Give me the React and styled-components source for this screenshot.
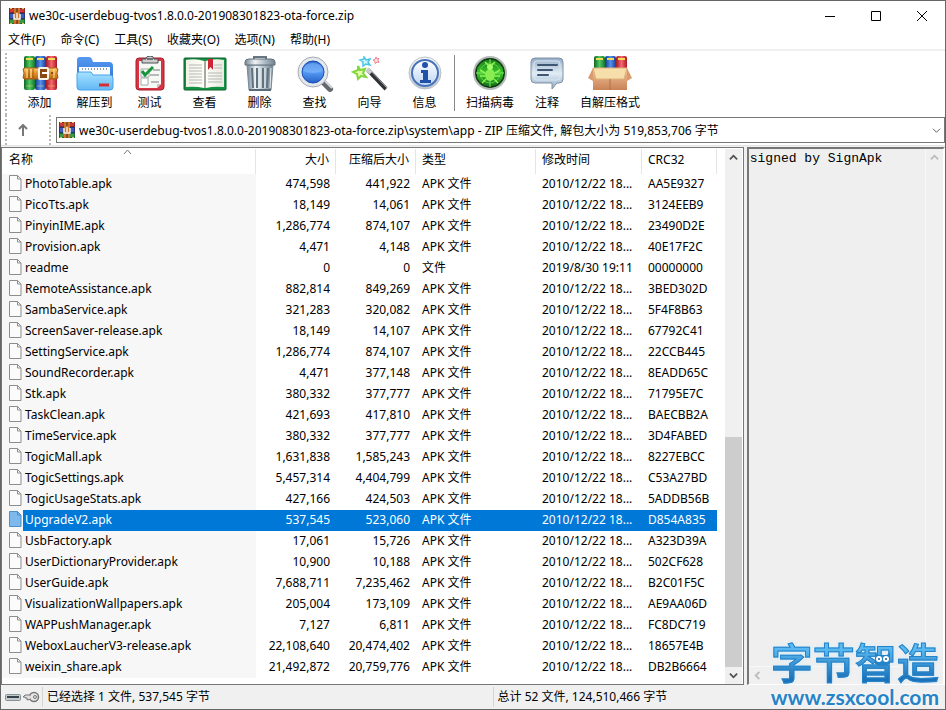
import React from "react";
import styled, { createGlobalStyle, css } from "styled-components";

const GlobalStyle = createGlobalStyle`
  *, *::before, *::after { box-sizing: border-box; }
  body { margin: 0; background: #fff; }
  body, button, select {
    font-family: "Noto Sans", "Noto Sans CJK SC", sans-serif;
    font-size: 12px;
    color: #000;
  }
  button { border: 0; padding: 0; background: none; }
`;

const Window = styled.div`
  display: flex;
  flex-direction: column;
  min-height: 100vh;
  background: #f0f0f0;
  border: 1px solid #666;
  position: relative;
`;

const GradientSheet = styled.svg`
  position: absolute;
`;

const TitleBar = styled.header`
  display: flex;
  align-items: center;
  gap: 4px;
  height: 30px;
  padding-left: 8px;
  background: #fff;
`;
const Title = styled.h1`
  flex: 1;
  margin: 0;
  font-size: 12px;
  line-height: 18px;
  font-weight: 400;
`;
const WindowButtons = styled.div`
  display: flex;
`;
const WindowButton = styled.button`
  width: 46px;
  height: 30px;
  display: grid;
  place-items: center;
`;

const MenuBar = styled.nav`
  display: flex;
  gap: 1px;
  height: 20px;
  background: #fff;
  border-bottom: 2px solid #f0f0f0;
`;
const MenuItem = styled.button`
  padding: 0 7px;
  line-height: 18px;
`;

const Grip = styled.span`
  width: 2px;
  align-self: stretch;
  background: repeating-linear-gradient(#b8b8b8 0 2px, #fff 2px 4px);
`;

const ToolBar = styled.div`
  display: flex;
  align-items: stretch;
  height: 64px;
  padding: 2px 0 0 4px;
  background: #fff;
`;
const ToolButton = styled.button`
  width: ${(p) => p.$width}px;
  display: flex;
  flex-direction: column;
  align-items: center;
  padding-top: 3px;
  line-height: 18px;
  white-space: nowrap;
`;
const ToolIcon = styled.span`
  height: 38px;
  display: flex;
  justify-content: center;
  align-items: flex-start;
`;
const ToolGroup = styled.div`
  display: flex;
  padding-left: 5px;
`;
const Separator = styled.span`
  width: 1px;
  margin: 2px 0 4px 2px;
  background: #888;
`;

const AddressBar = styled.div`
  display: flex;
  align-items: stretch;
  height: 30px;
  padding: 0 0 0 4px;
  background: #fff;
`;
const UpButton = styled.button`
  width: 42px;
  padding-right: 10px;
  display: grid;
  place-items: center;
`;
const AddressBox = styled.label`
  flex: 1;
  display: flex;
  align-items: center;
  gap: 4px;
  height: 26px;
  margin: 2px 0 0 5px;
  padding: 0 3px 0 2px;
  border: 1px solid #777;
  background: #fff;
`;
const AddressSelect = styled.select`
  flex: 1;
  min-width: 0;
  height: 22px;
  padding: 0;
  border: 0;
  background: transparent;
  appearance: none;
`;

const Content = styled.main`
  flex: 1;
  display: flex;
  gap: 3px;
  padding-top: 1px;
  border-top: 1px solid #e4e4e4;
`;
const Pane = styled.section`
  display: flex;
  border: 2px solid #777;
  border-color: #777 #fff #fff #777;
  border-bottom: 1px solid #777;
`;
const FilePane = styled(Pane)`
  flex: 1;
  min-width: 0;
  background: #fff;
  border-width: 1px;
  border-right-color: #777;
  padding: 1px 1px 0 0;
`;
const CommentPane = styled(Pane)`
  flex: 0 0 21%;
  background: #f0f0f0;
  border-bottom-color: #fff;
`;
const CommentColumn = styled.div`
  flex: 1;
  display: flex;
  flex-direction: column;
`;
const CommentText = styled.pre`
  flex: 1;
  margin: 0;
  padding: 1px 1px;
  font: 13px/18px "Liberation Mono", monospace;
  background: #efefef;
  border-right: 1px solid #f8f8f8;
  border-bottom: 1px solid #f8f8f8;
`;

const ListArea = styled.div`
  flex: 1;
  min-width: 0;
  overflow: hidden;
`;
const Table = styled.table`
  width: 715px;
  table-layout: fixed;
  border-collapse: separate;
  border-spacing: 0;
`;
const HeaderCell = styled.th`
  height: 25px;
  padding: 0 6px 3px;
  padding-left: ${(p) => (p.$sorted ? 7 : 6)}px;
  font-weight: 400;
  line-height: 18px;
  text-align: ${(p) => p.$align || "left"};
  border-right: 1px solid #e5e5e5;
  position: relative;
`;
const SortMark = styled.svg`
  position: absolute;
  top: 0;
  left: 48%;
`;
const Cell = styled.td`
  height: 21px;
  padding: 0 6px;
  line-height: 20px;
  vertical-align: top;
  white-space: nowrap;
  overflow: hidden;
  text-overflow: clip;
  text-align: ${(p) => p.$align || "left"};
`;
const NameCell = styled(Cell)`
  padding: 0;
  background: #f7f7f8;
`;
const NameLayout = styled.div`
  display: flex;
  height: 21px;
  padding-left: 7px;
  gap: 1px;
`;
const NameText = styled.span`
  flex: 1;
  padding-left: 2px;
`;
const Row = styled.tr`
  ${(p) =>
    p.$selected &&
    css`
      color: #fff;
      ${Cell} { background: #0078d7; }
      ${NameCell} { background: #f7f7f8; }
      ${NameText} { background: #0078d7; }
    `}
`;

const ScrollBar = styled.div`
  width: 17px;
  display: flex;
  flex-direction: column;
  background: #f0f0f0;
`;
const ScrollButton = styled.button`
  height: 17px;
  width: 17px;
  display: grid;
  place-items: center;
`;
const Track = styled.div`
  flex: 1;
  display: flex;
  flex-direction: column;
  justify-content: flex-end;
`;
const Thumb = styled.div`
  height: 46%;
  background: #cdcdcd;
`;

const StatusBar = styled.footer`
  display: flex;
  height: 24px;
  align-items: center;
  background: #f0f0f0;
`;
const StatusIcons = styled.span`
  display: flex;
  gap: 2px;
  width: 41px;
  padding-left: 4px;
`;
const StatusText = styled.span`
  flex: ${(p) => p.$grow};
  padding-left: 4px;
  line-height: 20px;
  border-left: 1px solid #d4d4d4;
`;

const Watermark = styled.a`
  position: absolute;
  right: 6px;
  bottom: 0;
  display: flex;
  flex-direction: column;
  align-items: center;
  text-decoration: none;
  color: #2583c8;
`;
const WatermarkName = styled.span`
  font: 500 42px/40px Lato, "Noto Sans CJK SC", sans-serif;
  padding-bottom: 2px;
  background: linear-gradient(#5ab9f0 15%, #1b72ba 85%);
  background-clip: text;
  color: transparent;
  -webkit-text-stroke: 1px #2583c8;
  filter: drop-shadow(0 0 2px #d5ecfa);
`;
const WatermarkSite = styled.span`
  font: 700 21px/24px Lato, sans-serif;
  text-shadow: 0 0 3px #fff;
`;
const WatermarkArt = styled.svg`
  position: absolute;
  left: 10px;
  top: 0;
`;

function Chevron({ dir = "down", color = "#505050", size = 9, weight = 2 }) {
  const turn = { down: 0, left: 90, up: 180, right: 270 }[dir];
  return (
    <svg width={size} height={size} viewBox="0 0 10 10">
      <path d="M1 3L5 7L9 3" fill="none" stroke={color} strokeWidth={weight} transform={`rotate(${turn} 5 5)`} />
    </svg>
  );
}

function ArchiveIcon() {
  return (
    <svg width="16" height="16" viewBox="0 0 16 16">
      <path fill="#8a2528" d="M0 0h16v5H0z" />
      <path fill="#26367f" d="M0 5h16v6H0z" />
      <path fill="#1d6a2c" d="M0 11h16v5H0z" />
      <path fill="#c8393c" d="M1 1h4v3H1zM11 1h4v3h-4z" />
      <path fill="#3d5cbb" d="M1 6h4v4H1zM11 6h4v4h-4z" />
      <path fill="#3d9a4b" d="M1 12h4v3H1zM11 12h4v3h-4z" />
      <path fill="#c9762c" d="M5 0h6v16H5z" />
      <path fill="#8d4a22" d="M7 0h2v4H7zM7 12h2v4H7z" />
      <path d="M5 6v5h6V6M8 5v5" fill="none" stroke="#f6f1ea" strokeWidth="1.500" />
      <path d="M1 .5h2M13 .5h2M1 15.500h2M13 15.500h2" stroke="#e0c764" />
    </svg>
  );
}

function FileIcon({ selected }) {
  const line = selected ? "#4f8fc6" : "#8d8d8d";
  return (
    <svg width="13" height="19" viewBox="0 0 13 19">
      <path d="M.5 1.500h8l3.500 3.500v11.500H.5z" fill={selected ? "#7db9ec" : "#fbfbfc"} stroke={line} />
      <path d="M8.500 1.500v3.500h3.500" fill="none" stroke={line} />
    </svg>
  );
}

function Books({ h = 34, w = 11, x = 1 }) {
  const fills = ["url(#bookGreen)", "url(#bookBlue)", "url(#bookRed)"];
  return fills.map((fill, i) => (
    <g key={fill}>
      <rect x={x + i * w} y="0" width={w} height={h} rx="2" fill={fill} />
      <path d={`M${x + i * w + 2} 3h${w - 4}`} stroke="#f6dc55" strokeWidth="2" />
    </g>
  ));
}

const AddIcon = () => (
  <svg width="38" height="36" viewBox="0 0 38 36">
    <Books x={3} />
    <path d="M5 30h7M16 30h7M27 30h7" stroke="#f6dc55" strokeOpacity=".5" />
    <path d="M2 13q2-2 5-1h25q3-1 5 1l-1 4 1 5q-3 2-5 1H7q-3 1-5-1l1-5z" fill="url(#leather)" stroke="#a65b12" />
    <path d="M6 13v9M10 13v9M33 13v9" stroke="#ffe69c" />
    <path d="M8 13v9M12 13v9" stroke="#9c5510" />
    <rect x="18" y="12" width="9" height="11" rx="1" fill="#8a4712" stroke="#f6f3e8" strokeWidth="2" />
    <path d="M21 17h7" stroke="#fff" strokeWidth="2" />
    <circle cx="31" cy="17" r="1" fill="#6b3508" />
  </svg>
);
const ExtractIcon = () => (
  <svg width="38" height="36" viewBox="0 0 38 36">
    <path d="M1 31V4q0-3 3-3h9q2 0 3 2l1 3h16q4 0 4 4v21z" fill="url(#folderBack)" />
    <path d="M3 11h31v12H3z" fill="#f7fafc" />
    <path d="M6 13h27" stroke="#909ba6" strokeWidth="2" strokeDasharray="1 2" />
    <path d="M1 18q0-2 2-2h12l2 3h17q3 0 3 3v9q0 3-3 3H4q-3 0-3-3z" fill="url(#folderFront)" stroke="#49a2e9" />
    <path d="M23 29h10" stroke="#d52e36" strokeWidth="3" />
  </svg>
);
const TestIcon = () => (
  <svg width="30" height="36" viewBox="0 0 30 36">
    <rect x="1" y="2" width="28" height="32" rx="3" fill="#d83443" stroke="#a71e2d" />
    <path d="M4 5h22v23l-4 4H4z" fill="#f7f7f4" />
    <path d="M22 32v-4h4z" fill="#c3c6c8" />
    <path d="M7 7V3h4q0-3 4-3t4 3h4v4z" fill="#ccc" stroke="#4c5154" />
    <path d="M12 3h6" stroke="#6e7376" strokeWidth="2" />
    <path d="M6 13h8v8H6zM6 22h7v7H6z" fill="#fff" stroke="#a0a8a6" />
    <path d="M7 15l3 4 8-8" fill="none" stroke="#16943b" strokeWidth="3" />
    <path d="M18 14h7M15 19h9M16 26h8" stroke="#a0a6a8" strokeWidth="1.500" />
  </svg>
);
const ViewIcon = () => (
  <svg width="44" height="36" viewBox="0 0 44 36">
    <rect x="1" y="2" width="42" height="32" rx="1" fill="#159143" stroke="#0b602b" />
    <path d="M3 4q10-2 18 1v27q-8-2-18-1zM41 4q-10-2-18 1v27q8-2 18-1z" fill="url(#paper)" />
    <path d="M21 5h2v27h-2z" fill="#a7a8a0" />
    <path d="M6 9h13M6 12h13M6 15h13M6 18h13M6 21h13M6 24h13M6 27h13M31 9h8M31 12h8M25 17h14M25 20h14M25 23h14M25 26h14" stroke="#b5b8b5" />
    <path d="M25 3h5v11l-2.500-3-2.500 3z" fill="#cf2434" />
  </svg>
);
const DeleteIcon = () => (
  <svg width="34" height="36" viewBox="0 0 34 36">
    <path d="M11 3V1h12v2" fill="none" stroke="#677580" strokeWidth="2" />
    <path d="M4 9h26l-2 25H6z" fill="url(#steel)" stroke="#788996" />
    <path d="M9 12l1 20M14 12v20M20 12v20M25 12l-1 20" stroke="#61727f" strokeWidth="2" />
    <path d="M12 12v20M17 12v20M22 12v20M28 12l-1 20" stroke="#e8f0f4" />
    <path d="M2 9V6q0-3 4-3h22q4 0 4 3v3z" fill="url(#steel)" stroke="#61717e" />
    <path d="M6 34h22" stroke="#596b78" strokeWidth="2" />
  </svg>
);
const FindIcon = () => (
  <svg width="40" height="38" viewBox="0 0 40 38">
    <path d="M27 25l8 8" stroke="#65696e" strokeWidth="6" strokeLinecap="round" />
    <path d="M29 24l8 8" stroke="#d5d8da" strokeWidth="2" />
    <circle cx="18" cy="16" r="13" fill="url(#lens)" stroke="#e4e8ec" strokeWidth="4" />
    <circle cx="18" cy="16" r="15" fill="none" stroke="#a4abb3" />
    <circle cx="18" cy="16" r="11" fill="none" stroke="#164eae" />
    <path d="M8 15q1-8 10-8t10 8q-10 4-20 0z" fill="#8bc4ff" opacity=".5" />
  </svg>
);
const WizardIcon = () => (
  <svg width="38" height="36" viewBox="0 0 38 36">
    <path d="M17 14L35 33" stroke="#303236" strokeWidth="4" />
    <path d="M18 13L36 32" stroke="#a2a5aa" />
    <path d="M16 13l4 4" stroke="#c8cccf" strokeWidth="4" />
    <path d="M7 10l2 4 5-1-2 4 3 4-5-1-3 3-1-5-4-2 5-2z" fill="#e4ffa8" stroke="#83d63f" strokeWidth="2" />
    <path d="M13 1l2 3 4-1-2 3 2 3-4-1-3 2v-4l-3-2 4-1z" fill="#ccf6ff" stroke="#4bc5e7" strokeWidth="1.500" />
    <path d="M25 1l1 2 2-.5-1 2 1 2-2-.5-2 1.500v-2l-2-1.500 2-.5z" fill="#ffe1e6" stroke="#ee8291" />
  </svg>
);
const InfoIcon = () => (
  <svg width="36" height="36" viewBox="0 0 36 36">
    <circle cx="18" cy="17" r="16" fill="url(#steelLight)" stroke="#b9c0c8" />
    <circle cx="18" cy="17" r="13" fill="url(#infoBlue)" stroke="#4771b8" strokeWidth="2" />
    <circle cx="18" cy="9" r="3" fill="#2150aa" />
    <path d="M14 14h7v10h3v3H13v-3h3v-7h-2z" fill="#2150aa" />
  </svg>
);
const VirusIcon = () => (
  <svg width="36" height="36" viewBox="0 0 36 36">
    <circle cx="18" cy="17" r="16" fill="#104b14" stroke="#b4bab7" strokeWidth="2" />
    <circle cx="18" cy="17" r="14" fill="url(#radar)" stroke="#172b18" />
    <path d="M4 17h28M18 3v28" stroke="#82e65c" />
    <circle cx="18" cy="17" r="10" fill="none" stroke="#61c941" />
    <ellipse cx="18" cy="19" rx="5" ry="6" fill="#89ed51" />
    <circle cx="18" cy="11" r="3" fill="#a2ff6a" />
    <path d="M13 17l-5-3M23 17l5-3M13 20H8M23 20h5M14 23l-4 4M22 23l4 4M16 9l-3-3M20 9l3-3" stroke="#8cf454" strokeWidth="1.500" />
  </svg>
);
const CommentIcon = () => (
  <svg width="34" height="36" viewBox="0 0 34 36">
    <path d="M5 2h24q4 0 4 4v17q0 4-4 4h-2l-5 6v-6H5q-4 0-4-4V6q0-4 4-4z" fill="url(#bubble)" stroke="#8090a5" />
    <rect x="4" y="5" width="26" height="19" rx="3" fill="none" stroke="#d9e8f5" />
    <path d="M8 9h19M8 14h14M8 19h10" stroke="#405774" strokeWidth="2" strokeLinecap="round" />
  </svg>
);
const SfxIcon = () => (
  <svg width="44" height="36" viewBox="0 0 44 36">
    <Books x={6} h={20} w={11} />
    <path d="M5 15h34v19H5z" fill="url(#box)" />
    <path d="M5 12L0 22l5 3V15h34v10l5-3-5-10z" fill="#d99a6d" />
    <path d="M5 12h34l-3 11H8z" fill="#f6dfab" stroke="#dfb17b" />
    <path d="M22 23v11" stroke="#b56f47" />
  </svg>
);

function Gradients() {
  const make = (id, colors, horizontal) => (
    <linearGradient id={id} x1="0" y1="0" x2={horizontal ? 1 : 0} y2={horizontal ? 0 : 1}>
      {colors.map((c, i) => <stop key={i} offset={i / (colors.length - 1)} stopColor={c} />)}
    </linearGradient>
  );
  return (
    <GradientSheet width="0" height="0" aria-hidden="true">
      <defs>
        {make("bookGreen", ["#106526", "#4fc863", "#14762d"], true)}
        {make("bookBlue", ["#153984", "#5591ed", "#193e9c"], true)}
        {make("bookRed", ["#a11c26", "#f66770", "#aa1624"], true)}
        {make("leather", ["#ffd06a", "#e08f26", "#b4650c"])}
        {make("folderBack", ["#5599f0", "#276bd2"])}
        {make("folderFront", ["#a5e2ff", "#63b7f5"])}
        {make("paper", ["#f2f1e6", "#fffffa", "#e8e9df"], true)}
        {make("steel", ["#778895", "#edf2f4", "#aebbc4", "#71818e"], true)}
        {make("steelLight", ["#f8fafc", "#bdc6d0"])}
        {make("lens", ["#2862cb", "#569bf4", "#1d55c0"])}
        {make("infoBlue", ["#fff", "#bbd5f3"])}
        {make("radar", ["#187c1a", "#38c829", "#136c18"])}
        {make("bubble", ["#94acc5", "#e2edf5", "#90aac5"])}
        {make("box", ["#edbd91", "#c98357"])}
      </defs>
    </GradientSheet>
  );
}

const menus = ["文件(F)", "命令(C)", "工具(S)", "收藏夹(O)", "选项(N)", "帮助(H)"];
const mainTools = [
  ["添加", AddIcon, 55],
  ["解压到", ExtractIcon, 55],
  ["测试", TestIcon, 55],
  ["查看", ViewIcon, 55],
  ["删除", DeleteIcon, 55],
  ["查找", FindIcon, 55],
  ["向导", WizardIcon, 55],
  ["信息", InfoIcon, 55],
];
const extraTools = [
  ["扫描病毒", VirusIcon, 60],
  ["注释", CommentIcon, 54],
  ["自解压格式", SfxIcon, 72],
];
const APK_DATE = "2010/12/22 18...";
const files = [
  ["PhotoTable.apk", "474,598", "441,922", "AA5E9327"],
  ["PicoTts.apk", "18,149", "14,061", "3124EEB9"],
  ["PinyinIME.apk", "1,286,774", "874,107", "23490D2E"],
  ["Provision.apk", "4,471", "4,148", "40E17F2C"],
  ["readme", "0", "0", "00000000", "文件", "2019/8/30 19:11"],
  ["RemoteAssistance.apk", "882,814", "849,269", "3BED302D"],
  ["SambaService.apk", "321,283", "320,082", "5F4F8B63"],
  ["ScreenSaver-release.apk", "18,149", "14,107", "67792C41"],
  ["SettingService.apk", "1,286,774", "874,107", "22CCB445"],
  ["SoundRecorder.apk", "4,471", "377,148", "8EADD65C"],
  ["Stk.apk", "380,332", "377,777", "71795E7C"],
  ["TaskClean.apk", "421,693", "417,810", "BAECBB2A"],
  ["TimeService.apk", "380,332", "377,777", "3D4FABED"],
  ["TogicMall.apk", "1,631,838", "1,585,243", "8227EBCC"],
  ["TogicSettings.apk", "5,457,314", "4,404,799", "C53A27BD"],
  ["TogicUsageStats.apk", "427,166", "424,503", "5ADDB56B"],
  ["UpgradeV2.apk", "537,545", "523,060", "D854A835"],
  ["UsbFactory.apk", "17,061", "15,726", "A323D39A"],
  ["UserDictionaryProvider.apk", "10,900", "10,188", "502CF628"],
  ["UserGuide.apk", "7,688,711", "7,235,462", "B2C01F5C"],
  ["VisualizationWallpapers.apk", "205,004", "173,109", "AE9AA06D"],
  ["WAPPushManager.apk", "7,127", "6,811", "FC8DC719"],
  ["WeboxLaucherV3-release.apk", "22,108,640", "20,474,402", "18657E4B"],
  ["weixin_share.apk", "21,492,872", "20,759,776", "DB2B6664"],
];

function Tools({ items }) {
  return (
    <ToolGroup>
      {items.map(([label, Icon, width]) => (
        <ToolButton key={label} $width={width}>
          <ToolIcon><Icon /></ToolIcon>
          {label}
        </ToolButton>
      ))}
    </ToolGroup>
  );
}

export default function App() {
  return (
    <Window>
      <GlobalStyle />
      <Gradients />
      <TitleBar>
        <ArchiveIcon />
        <Title>we30c-userdebug-tvos1.8.0.0-201908301823-ota-force.zip</Title>
        <WindowButtons>
          <WindowButton aria-label="最小化">
            <svg width="10" height="10"><path d="M0 5.500h10" stroke="#000" /></svg>
          </WindowButton>
          <WindowButton aria-label="最大化">
            <svg width="10" height="10"><path d="M.5.5h9v9h-9z" fill="none" stroke="#000" /></svg>
          </WindowButton>
          <WindowButton aria-label="关闭">
            <svg width="10" height="10"><path d="M0 0l10 10M10 0L0 10" stroke="#000" /></svg>
          </WindowButton>
        </WindowButtons>
      </TitleBar>
      <MenuBar>
        {menus.map((m) => <MenuItem key={m}>{m}</MenuItem>)}
      </MenuBar>
      <ToolBar>
        <Grip />
        <Tools items={mainTools} />
        <Separator />
        <Tools items={extraTools} />
      </ToolBar>
      <AddressBar>
        <Grip />
        <UpButton aria-label="上一级">
          <svg width="10" height="12"><path d="M5 12V1M1 5l4-4 4 4" fill="none" stroke="#777" strokeWidth="2" /></svg>
        </UpButton>
        <Grip />
        <AddressBox>
          <ArchiveIcon />
          <AddressSelect aria-label="地址">
            <option>we30c-userdebug-tvos1.8.0.0-201908301823-ota-force.zip\system\app - ZIP 压缩文件, 解包大小为 519,853,706 字节</option>
          </AddressSelect>
          <Chevron weight={1} />
        </AddressBox>
      </AddressBar>
      <Content>
        <FilePane>
          <ListArea>
            <Table>
              <colgroup>
                <col width="254" /><col width="80" /><col width="80" />
                <col width="120" /><col width="106" /><col width="75" />
              </colgroup>
              <thead>
                <tr>
                  <HeaderCell $sorted>
                    名称
                    <SortMark width="9" height="6"><path d="M1 5l3.500-4L8 5" fill="none" stroke="#777" /></SortMark>
                  </HeaderCell>
                  <HeaderCell $align="right">大小</HeaderCell>
                  <HeaderCell $align="right">压缩后大小</HeaderCell>
                  <HeaderCell>类型</HeaderCell>
                  <HeaderCell>修改时间</HeaderCell>
                  <HeaderCell>CRC32</HeaderCell>
                </tr>
              </thead>
              <tbody>
                {files.map(([name, size, packed, crc, type = "APK 文件", date = APK_DATE]) => {
                  const selected = name === "UpgradeV2.apk";
                  return (
                    <Row key={name} $selected={selected}>
                      <NameCell>
                        <NameLayout>
                          <FileIcon selected={selected} />
                          <NameText>{name}</NameText>
                        </NameLayout>
                      </NameCell>
                      <Cell $align="right">{size}</Cell>
                      <Cell $align="right">{packed}</Cell>
                      <Cell>{type}</Cell>
                      <Cell>{date}</Cell>
                      <Cell>{crc}</Cell>
                    </Row>
                  );
                })}
              </tbody>
            </Table>
          </ListArea>
          <ScrollBar>
            <ScrollButton aria-label="向上滚动"><Chevron dir="up" /></ScrollButton>
            <Track><Thumb /></Track>
            <ScrollButton aria-label="向下滚动"><Chevron /></ScrollButton>
          </ScrollBar>
        </FilePane>
        <CommentPane>
          <CommentColumn>
            <CommentText>signed by SignApk</CommentText>
            <ScrollButton aria-label="向左滚动"><Chevron dir="left" color="#bbb" /></ScrollButton>
          </CommentColumn>
          <ScrollBar>
            <ScrollButton aria-label="注释向上滚动"><Chevron dir="up" color="#bbb" /></ScrollButton>
            <Track />
            <ScrollButton aria-label="注释向下滚动"><Chevron color="#bbb" /></ScrollButton>
            <ScrollButton as="span" />
          </ScrollBar>
        </CommentPane>
      </Content>
      <StatusBar>
        <StatusIcons>
          <svg width="16" height="12"><rect x=".5" y="3.500" width="15" height="6" rx="1" fill="#c3cacd" stroke="#899196" /><path d="M2 5h12v2H2z" fill="#38424b" /></svg>
          <svg width="17" height="12"><circle cx="11" cy="6" r="4.500" fill="#e6e6e6" stroke="#777" strokeWidth="1.500" /><circle cx="12" cy="6" r="1.500" fill="none" stroke="#777" /><path d="M8 4H2L0 6h2v1h2v2l4-1" fill="#ddd" stroke="#777" /></svg>
        </StatusIcons>
        <StatusText $grow={450}>已经选择 1 文件, 537,545 字节</StatusText>
        <StatusText $grow={452}>总计 52 文件, 124,510,466 字节</StatusText>
      </StatusBar>
      <Watermark href="#">
        <WatermarkName>字节智造</WatermarkName>
        <WatermarkArt width="120" height="26" aria-hidden="true">
          <path d="M94 9l3 3h9l3-3v12q-7 4-15 0z" fill="#2583c8" />
          <circle cx="98" cy="16" r="3" fill="#fff" />
          <circle cx="105" cy="16" r="3" fill="#fff" />
          <circle cx="98" cy="16" r="1" fill="#17568c" />
          <circle cx="105" cy="16" r="1" fill="#17568c" />
        </WatermarkArt>
        <WatermarkSite>www.zsxcool.com</WatermarkSite>
      </Watermark>
    </Window>
  );
}
